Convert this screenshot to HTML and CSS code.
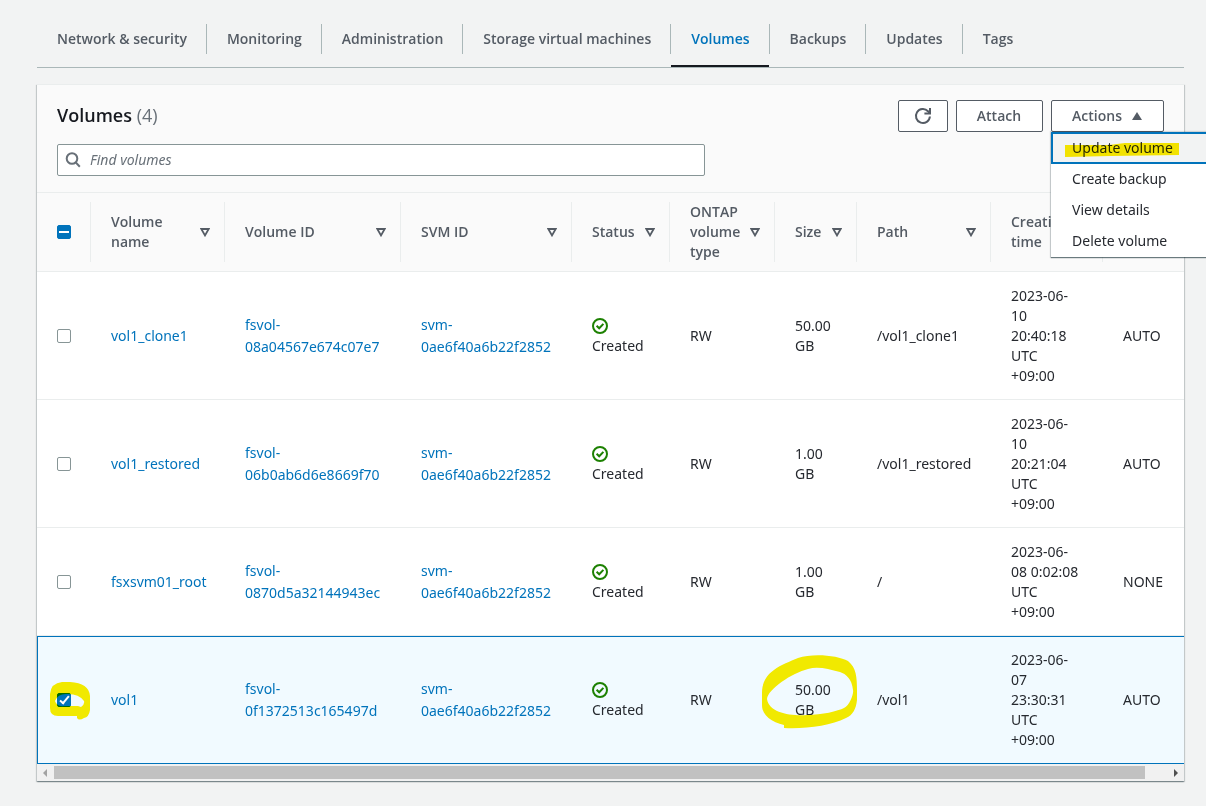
FILE: index.html
```html
<!doctype html>
<html lang="en">
  <head>
    <meta charset="UTF-8" />
    <meta name="viewport" content="width=device-width, initial-scale=1.0" />
    <title>Volumes</title>
    <link rel="stylesheet" href="styles.css">
  </head>
  <body>
    <svg class="sprite" aria-hidden="true">
      <symbol id="sort" viewBox="0 0 10 9">
        <path d="M1.3 1h7.4L5 7.4z" fill="none" stroke="currentColor" stroke-width="1.8" />
      </symbol>
      <symbol id="ok" viewBox="0 0 16 16">
        <circle cx="8" cy="8" r="7" fill="none" stroke="currentColor" stroke-width="2" />
        <path d="M4.6 7.8l2.6 2.5 4.2-4.4" fill="none" stroke="currentColor" stroke-width="2" />
      </symbol>
    </svg>

    <nav class="tabs">
      <a href="#network">Network &amp; security</a>
      <a href="#monitoring">Monitoring</a>
      <a href="#administration">Administration</a>
      <a href="#svm">Storage virtual machines</a>
      <a href="#volumes" class="active">Volumes</a>
      <a href="#backups">Backups</a>
      <a href="#updates">Updates</a>
      <a href="#tags">Tags</a>
    </nav>

    <main class="panel">
      <div class="toolbar">
        <div class="title-row">
          <h2>Volumes <span class="count">(4)</span></h2>
          <div class="buttons">
            <button type="button" class="btn btn-icon" aria-label="Refresh">
              <svg width="18" height="18" viewBox="0 0 18 18" fill="none" stroke="currentColor" stroke-width="2">
                <path d="M15.9 9.5A7 7 0 1 1 14 4.2L15.6 6" />
                <path d="M16 1v5.6h-5.6" />
              </svg>
            </button>
            <button type="button" class="btn">Attach</button>
            <div class="dropdown">
              <button type="button" class="btn btn-actions" aria-expanded="true">
                Actions
                <svg width="10" height="8" viewBox="0 0 10 8"><path d="M5 0l5 8H0z" fill="currentColor" /></svg>
              </button>
              <div class="menu">
                <button type="button" class="menu-item focused">Update volume
                  <svg class="marker marker-menu" width="114" height="14" viewBox="0 0 114 14">
                    <path d="M0 2L44 2L60 0H114V12L46 13L0 14z" />
                  </svg>
                </button>
                <button type="button" class="menu-item">Create backup</button>
                <button type="button" class="menu-item">View details</button>
                <button type="button" class="menu-item">Delete volume</button>
              </div>
            </div>
          </div>
        </div>
        <div class="search">
          <svg width="16" height="16" viewBox="0 0 16 16" fill="none" stroke="currentColor" stroke-width="2">
            <circle cx="7" cy="6.5" r="5.3" />
            <path d="M10.6 10.3l4.2 4.4" />
          </svg>
          <input type="text" placeholder="Find volumes" aria-label="Find volumes" />
        </div>
      </div>

      <div class="table-wrap">
        <table>
          <colgroup>
            <col class="c-check"><col class="c-name"><col class="c-id"><col class="c-svm"><col class="c-status">
            <col class="c-type"><col class="c-size"><col class="c-path"><col class="c-time"><col>
          </colgroup>
          <thead>
            <tr>
              <th><input type="checkbox" class="partial" aria-label="Select all volumes" /></th>
              <th><div class="head"><span>Volume name</span><svg><use href="#sort" /></svg></div></th>
              <th><div class="head"><span>Volume ID</span><svg><use href="#sort" /></svg></div></th>
              <th><div class="head"><span>SVM ID</span><svg><use href="#sort" /></svg></div></th>
              <th><div class="head"><span>Status</span><svg><use href="#sort" /></svg></div></th>
              <th><div class="head"><span>ONTAP volume type</span><svg><use href="#sort" /></svg></div></th>
              <th><div class="head"><span>Size</span><svg><use href="#sort" /></svg></div></th>
              <th><div class="head"><span>Path</span><svg><use href="#sort" /></svg></div></th>
              <th><div class="head"><span>Creation time</span><svg><use href="#sort" /></svg></div></th>
              <th><div class="head"></div></th>
            </tr>
          </thead>
          <tbody>
            <tr>
              <td><input type="checkbox" aria-label="Select vol1_clone1" /></td>
              <td><a href="#vol1_clone1">vol1_clone1</a></td>
              <td class="ids"><a href="#fsvol">fsvol-<br>08a04567e674c07e7</a></td>
              <td class="ids"><a href="#svm">svm-<br>0ae6f40a6b22f2852</a></td>
              <td><svg class="ok"><use href="#ok" /></svg>Created</td>
              <td>RW</td>
              <td>50.00<br>GB</td>
              <td>/vol1_clone1</td>
              <td>2023-06-<br>10<br>20:40:18<br>UTC<br>+09:00</td>
              <td>AUTO</td>
            </tr>
            <tr>
              <td><input type="checkbox" aria-label="Select vol1_restored" /></td>
              <td><a href="#vol1_restored">vol1_restored</a></td>
              <td class="ids"><a href="#fsvol">fsvol-<br>06b0ab6d6e8669f70</a></td>
              <td class="ids"><a href="#svm">svm-<br>0ae6f40a6b22f2852</a></td>
              <td><svg class="ok"><use href="#ok" /></svg>Created</td>
              <td>RW</td>
              <td>1.00<br>GB</td>
              <td>/vol1_restored</td>
              <td>2023-06-<br>10<br>20:21:04<br>UTC<br>+09:00</td>
              <td>AUTO</td>
            </tr>
            <tr>
              <td><input type="checkbox" aria-label="Select fsxsvm01_root" /></td>
              <td><a href="#fsxsvm01_root">fsxsvm01_root</a></td>
              <td class="ids"><a href="#fsvol">fsvol-<br>0870d5a32144943ec</a></td>
              <td class="ids"><a href="#svm">svm-<br>0ae6f40a6b22f2852</a></td>
              <td><svg class="ok"><use href="#ok" /></svg>Created</td>
              <td>RW</td>
              <td>1.00<br>GB</td>
              <td>/</td>
              <td>2023-06-<br>08 0:02:08<br>UTC<br>+09:00</td>
              <td>NONE</td>
            </tr>
            <tr class="selected">
              <td>
                <div class="marked">
                  <input type="checkbox" checked aria-label="Select vol1" />
                  <svg class="marker marker-check" width="40" height="38" viewBox="0 0 40 38">
                    <path fill-rule="evenodd" d="M0 12Q1 1 12 0H20Q39 1 40 14V28Q39 35 34 36Q29 39 27 36V34H8Q0 34 0 26zM5 19Q7 25 14 24H28L31 25Q35 22 34 19Q29 12 18 12Q8 11 5 19z" />
                  </svg>
                </div>
              </td>
              <td><a href="#vol1">vol1</a></td>
              <td class="ids"><a href="#fsvol">fsvol-<br>0f1372513c165497d</a></td>
              <td class="ids"><a href="#svm">svm-<br>0ae6f40a6b22f2852</a></td>
              <td><svg class="ok"><use href="#ok" /></svg>Created</td>
              <td>RW</td>
              <td>
                <div class="marked">50.00<br>GB
                  <svg class="marker marker-size" width="96" height="74" viewBox="0 0 96 74">
                    <path fill-rule="evenodd" d="M0 38C0 16 20 10 36 3C50-2 76 0 86 6C96 14 95 26 95 45C94 54 91 60 84 63C68 71 44 74 22 73V70C10 67 0 61 0 50zM5 44C7 58 28 61 45 60C60 60 76 56 82 53C88 50 92 38 91 35C90 24 84 19 78 17C66 14 56 11 46 14C30 18 6 34 5 44z" />
                  </svg>
                </div>
              </td>
              <td>/vol1</td>
              <td>2023-06-<br>07<br>23:30:31<br>UTC<br>+09:00</td>
              <td>AUTO</td>
            </tr>
          </tbody>
        </table>
      </div>

      <div class="scrollbar">
        <svg class="dim" width="4" height="8" viewBox="0 0 4 8"><path d="M4 0v8L0 4z" fill="currentColor" /></svg>
        <div class="track"><div class="thumb"></div></div>
        <svg width="4" height="8" viewBox="0 0 4 8"><path d="M0 0v8l4-4z" fill="currentColor" /></svg>
      </div>
    </main>
  </body>
</html>
```

FILE: styles.css
```css
* {
  box-sizing: border-box;
}
body {
  margin: 0;
  padding: 24px 22px 24px 37px;
  background-color: #f2f3f3;
  color: #26292f;
  font-family: 'Noto Sans', 'Open Sans', sans-serif;
  font-size: 14px;
  line-height: 20px;
  overflow-x: hidden;
}
a {
  color: #0073bb;
  text-decoration: none;
}
button,
input {
  font: inherit;
}
.sprite {
  display: none;
}
.tabs,
h2,
th,
.btn {
  font-family: 'Open Sans', 'Noto Sans', sans-serif;
  font-weight: 600;
}

/* Tabs */
.tabs {
  display: flex;
  border-bottom: 1px solid #aab7b8;
  margin-bottom: 16px;
}
.tabs a {
  position: relative;
  padding: 5px 19px 5px 20px;
  margin-bottom: 13px;
  border-right: 1px solid #aab7b8;
  color: #545b64;
  white-space: nowrap;
}
.tabs a:last-child {
  border-right: none;
}
.tabs a.active {
  color: #0073bb;
}
.tabs a.active::after {
  content: '';
  position: absolute;
  left: 0;
  right: 0;
  bottom: -13px;
  height: 2px;
  background-color: #16191f;
}

/* Panel */
.panel {
  background-color: #fff;
  border-top: 1px solid #eaeded;
  box-shadow: 0 1px 1px rgba(0, 28, 36, 0.3), 1px 1px 1px rgba(0, 28, 36, 0.15), -1px 1px 1px rgba(0, 28, 36, 0.15);
}
.toolbar {
  padding: 15px 20px 16px;
  background-color: #fafafa;
  border-bottom: 1px solid #eaeded;
}
.title-row {
  display: flex;
  justify-content: space-between;
  align-items: flex-start;
  margin-bottom: 12px;
}
h2 {
  margin: 0;
  color: #16191f;
  font-size: 18px;
  line-height: 30px;
}
.count {
  color: #687078;
  font-weight: 400;
}
.buttons {
  display: flex;
  gap: 8px;
}
.btn {
  display: flex;
  align-items: center;
  gap: 10px;
  height: 32px;
  padding: 0 21px 0 20px;
  background-color: #fff;
  border: 1px solid #545b64;
  border-radius: 2px;
  color: #545b64;
  cursor: pointer;
}
.btn-icon {
  padding: 0 15px;
}
.dropdown {
  position: relative;
}
.menu {
  position: absolute;
  z-index: 2;
  top: 100%;
  left: 0;
  width: 200px;
  padding-bottom: 1px;
  background-color: #fff;
  box-shadow: 0 1px 1px rgba(0, 28, 36, 0.5), 0 0 1px 1px rgba(0, 28, 36, 0.15);
}
.menu-item {
  display: block;
  position: relative;
  width: 100%;
  height: 31px;
  padding: 0 21px;
  background: none;
  border: none;
  color: #26292f;
  text-align: left;
}
.menu-item.focused {
  height: 32px;
  margin-bottom: -1px;
  padding: 0 19px;
  border: 2px solid #0073bb;
  background-color: #f2f3f3;
}
.search {
  display: flex;
  align-items: center;
  gap: 9px;
  max-width: 648px;
  height: 32px;
  padding: 0 7px;
  background-color: #fff;
  border: 1px solid #879596;
  border-radius: 2px;
  color: #687078;
}
.search input {
  flex: 1;
  padding: 0;
  border: none;
  outline: none;
  background: none;
}
.search input::placeholder {
  color: #687078;
  font-style: italic;
}

/* Table */
.table-wrap {
  overflow: hidden;
}
table {
  width: 102%;
  table-layout: fixed;
  border-collapse: separate;
  border-spacing: 0;
}
.c-check { width: 53px; }
.c-name { width: 134px; }
.c-id { width: 176px; }
.c-svm { width: 171px; }
.c-status { width: 98px; }
.c-type { width: 105px; }
.c-size { width: 82px; }
.c-path { width: 134px; }
.c-time { width: 112px; }

th {
  padding: 9px 0;
  background-color: #fafafa;
  border-bottom: 1px solid #eaeded;
  color: #545b64;
  text-align: left;
}
th:first-child {
  padding-left: 20px;
}
.head {
  display: flex;
  align-items: center;
  justify-content: space-between;
  height: 60px;
  padding: 0 14px 0 20px;
  border-left: 1px solid #eaeded;
}
.head svg {
  flex: none;
  width: 10px;
  height: 9px;
}
td {
  padding: 14px 0 13px 20px;
  border-bottom: 1px solid #eaeded;
  vertical-align: middle;
}
td:nth-child(n + 2) {
  padding-left: 21px;
}
.ids {
  line-height: 22px;
}
.ok {
  display: block;
  width: 16px;
  height: 16px;
  margin: 2px 0;
  color: #1d8102;
}
.selected td {
  background-color: #f1faff;
  border-top: 1px solid #0073bb;
  border-bottom-color: #0073bb;
  padding-top: 13px;
}
.selected td:first-child {
  border-left: 1px solid #0073bb;
  padding-left: 19px;
}

/* Checkboxes */
input[type='checkbox'] {
  appearance: none;
  display: block;
  position: relative;
  width: 14px;
  height: 14px;
  margin: 0;
  background-color: #fff;
  border: 1px solid #879596;
  border-radius: 2px;
}
input.partial,
input[type='checkbox']:checked {
  background-color: #0073bb;
  border-color: #0073bb;
}
input.partial::after {
  content: '';
  position: absolute;
  left: 1px;
  top: 5px;
  width: 10px;
  height: 2px;
  background-color: #fff;
}
input:checked::after {
  content: '';
  box-sizing: border-box;
  position: absolute;
  left: 4px;
  top: 0;
  width: 5px;
  height: 10px;
  border: solid #fff;
  border-width: 0 2px 2px 0;
  transform: rotate(40deg);
}

/* Highlighter marks */
.marked {
  position: relative;
}
.marker {
  position: absolute;
  fill: #ffee00;
  mix-blend-mode: multiply;
  pointer-events: none;
}
.marker-menu {
  left: 12px;
  top: 9px;
}
.marker-check {
  left: -7px;
  top: -11px;
}
.marker-size {
  left: -33px;
  top: -25px;
}

/* Horizontal scroll strip */
.scrollbar {
  display: flex;
  align-items: center;
  height: 17px;
  padding: 0 6px;
  gap: 7px;
  background-color: #f1f1f1;
  color: #505050;
}
.scrollbar .dim {
  color: #a3a3a3;
}
.track {
  flex: 1;
}
.thumb {
  width: 98%;
  height: 13px;
  background-color: #c1c1c1;
}
```
